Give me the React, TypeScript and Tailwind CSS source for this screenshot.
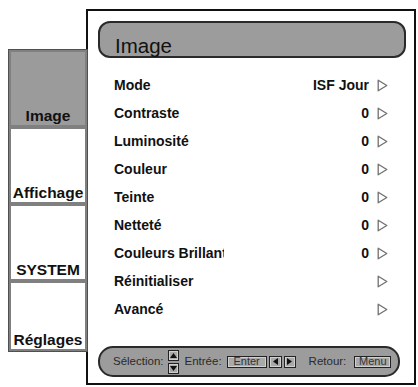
import React from "react";

const rows: [string, string][] = [
  ["Mode", "ISF Jour"],
  ["Contraste", "0"],
  ["Luminosité", "0"],
  ["Couleur", "0"],
  ["Teinte", "0"],
  ["Netteté", "0"],
  ["Couleurs Brillant", "0"],
  ["Réinitialiser", ""],
  ["Avancé", ""],
];

function Tri() {
  return (
    <svg width="11" height="13" viewBox="0 0 11 13" className="ml-[8px] shrink-0">
      <path d="M1.2 1.2 L9.8 6.5 L1.2 11.8 Z" fill="none" stroke="#707070" strokeWidth="1.3" strokeLinejoin="round" />
    </svg>
  );
}

function Key({ children, className = "" }: { children: React.ReactNode; className?: string }) {
  return (
    <div
      className={
        "flex items-center justify-center border border-[#222] bg-[#a9a9a9] shadow-[inset_0_0_0_1px_#d0d0d0] " +
        className
      }
    >
      {children}
    </div>
  );
}

function ArrowSvg({ dir }: { dir: "up" | "down" | "left" | "right" }) {
  const d =
    dir === "up"
      ? "M1 7 L4.5 2 L8 7 Z"
      : dir === "down"
      ? "M1 2 L4.5 7 L8 2 Z"
      : dir === "left"
      ? "M7 1 L2 4.5 L7 8 Z"
      : "M2 1 L7 4.5 L2 8 Z";
  return (
    <svg width="9" height="9" viewBox="0 0 9 9">
      <path d={d} fill="#111" />
    </svg>
  );
}

export default function App() {
  const tabs = [
    { label: "Image", h: "h-[77px]", active: true },
    { label: "Affichage", h: "h-[77px]", active: false },
    { label: "SYSTEM", h: "h-[77px]", active: false },
    { label: "Réglages", h: "h-[70px]", active: false },
  ];
  return (
    <div
      className="w-[418px] h-[387px] bg-white flex overflow-hidden"
      style={{ fontFamily: '"Liberation Sans", Arial, sans-serif' }}
    >
      {/* tab column */}
      <div className="relative z-10 ml-[8px] mt-[49px] w-[80px] self-start flex flex-col border border-[#505050] bg-white">
        {tabs.map((t) => (
          <div
            key={t.label}
            className={
              "flex items-end justify-center border-2 border-[#808080] " +
              t.h +
              (t.active ? " bg-[#9b9b9b]" : " bg-white")
            }
          >
            <span className="text-[15.5px] font-bold text-[#111] leading-none pb-[2px] whitespace-nowrap">
              {t.label}
            </span>
          </div>
        ))}
      </div>

      {/* main panel */}
      <div className="-ml-[2px] mt-[9px] w-[330px] h-[376px] border-2 border-[#111] flex flex-col">
        <div className="ml-[10px] mt-[10px] w-[308px] h-[37px] rounded-[12px] border-2 border-[#2a2a2a] bg-[#9c9c9c] flex items-end pl-[15px]">
          <span className="text-[20.5px] leading-[20px] text-[#111]">Image</span>
        </div>

        <div className="mt-[13px] flex flex-col">
          {rows.map(([label, value]) => (
            <div key={label} className="h-[28px] flex items-center pl-[26px] pr-[26px]">
              <div className="w-[110px] shrink-0 overflow-hidden whitespace-nowrap text-[14px] font-bold text-[#111] leading-none">
                {label}
              </div>
              <div className="flex-1 text-right text-[14px] font-bold text-[#111] leading-none">{value}</div>
              <Tri />
            </div>
          ))}
        </div>

        <div className="ml-[10px] mt-[23px] w-[302px] h-[31px] rounded-[15px] border-2 border-[#2a2a2a] bg-[#9c9c9c] flex items-center pl-[13px] text-[11.5px] text-[#2a2a2a] leading-none">
          <span>Sélection:</span>
          <div className="ml-[4px] flex flex-col gap-[2px]">
            <Key className="w-[11px] h-[11px]">
              <ArrowSvg dir="up" />
            </Key>
            <Key className="w-[11px] h-[11px]">
              <ArrowSvg dir="down" />
            </Key>
          </div>
          <span className="ml-[6px]">Entrée:</span>
          <Key className="ml-[5px] w-[40px] h-[12px] text-[11px] text-[#333]">Enter</Key>
          <Key className="ml-[2px] w-[13px] h-[12px]">
            <ArrowSvg dir="left" />
          </Key>
          <Key className="ml-[2px] w-[12px] h-[12px]">
            <ArrowSvg dir="right" />
          </Key>
          <span className="ml-[13px]">Retour:</span>
          <Key className="ml-[8px] w-[37px] h-[12px] text-[11px] text-[#333]">Menu</Key>
        </div>
      </div>
    </div>
  );
}
